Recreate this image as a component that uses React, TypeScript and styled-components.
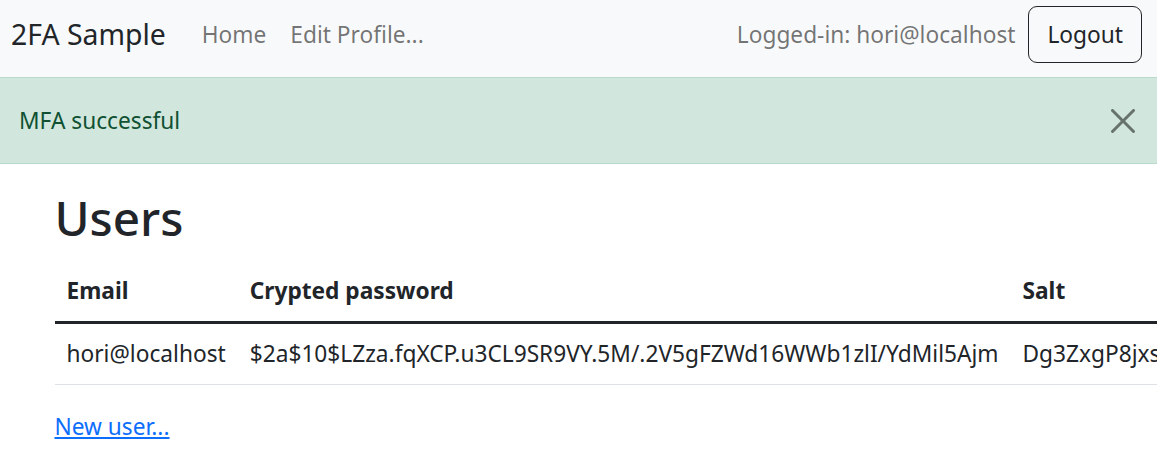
import { type FC } from 'react';
import styled, { createGlobalStyle } from 'styled-components';

const BODY_COLOR = `#212529`;
const MUTED = `rgba(0, 0, 0, 0.55)`;
const LINK_BLUE = `#0d6efd`;

const GlobalStyle = createGlobalStyle`
  html, body {
    margin: 0;
    padding: 0;
    overflow: hidden;
    background: #fff;
  }
  body {
    font-family: "Noto Sans", "Open Sans", sans-serif;
    font-size: 22.7px;
    line-height: 36px;
    color: ${BODY_COLOR};
  }
  * {
    box-sizing: border-box;
  }
`;

const Navbar = styled.nav`
  display: flex;
  align-items: center;
  height: 77px;
  padding: 6px 15px 14px 11px;
  background: #f8f9fa;
`;

const Brand = styled.a`
  font-size: 28.4px;
  line-height: 45px;
  color: ${BODY_COLOR};
  text-decoration: none;
  margin-right: 24px;
`;

const NavList = styled.ul`
  display: flex;
  list-style: none;
  margin: 0;
  padding: 0;
`;

const NavLink = styled.a`
  display: block;
  padding: 0 12px;
  color: ${MUTED};
  text-decoration: none;
`;

const NavRight = styled.div`
  display: flex;
  align-items: center;
  gap: 13px;
  margin-left: auto;
`;

const NavText = styled.span`
  color: ${MUTED};
`;

const OutlineButton = styled.button`
  font-family: inherit;
  font-size: 22.7px;
  line-height: 36px;
  height: 57px;
  padding: 0 18px;
  color: ${BODY_COLOR};
  background: transparent;
  border: 1.5px solid ${BODY_COLOR};
  border-radius: 9px;
  cursor: pointer;
`;

const Alert = styled.div`
  display: flex;
  align-items: center;
  justify-content: space-between;
  padding: 24px 22px 24px 19px;
  height: 87px;
  margin-bottom: 24px;
  color: #0f5132;
  background: #d1e7dd;
  border-top: 1px solid #badbcc;
  border-bottom: 1px solid #badbcc;
`;

const CloseButton = styled.button`
  display: flex;
  width: 24px;
  height: 24px;
  padding: 0;
  border: 0;
  background: transparent;
  color: #000;
  opacity: 0.5;
  cursor: pointer;
`;

const Container = styled.main`
  max-width: 1080px;
  margin: 0 auto;
  padding: 0 18px 0 16px;
`;

const Title = styled.h1`
  margin: 0 0 12px;
  font-size: 47.6px;
  font-weight: 500;
  line-height: 60.5px;
`;

const Table = styled.table`
  border-collapse: collapse;
  margin-bottom: 24px;
  white-space: nowrap;
`;

const Th = styled.th`
  padding: 12px;
  text-align: left;
  font-weight: 700;
  border-bottom: 3px solid ${BODY_COLOR};
`;

const Td = styled.td`
  padding: 12px;
  border-bottom: 1px solid #dee2e6;
`;

const TextLink = styled.a`
  color: ${LINK_BLUE};
  text-decoration: underline;
`;

const users = [
  {
    email: 'hori@localhost',
    crypted: '$2a$10$LZza.fqXCP.u3CL9SR9VY.5M/.2V5gFZWd16WWb1zlI/YdMil5Ajm',
    salt: 'Dg3ZxgP8jxsK2pWqYz7B',
  },
];

const CloseIcon: FC = () => (
  <svg width="24" height="24" viewBox="0 0 16 16" fill="currentColor">
    <path d="M.293.293a1 1 0 0 1 1.414 0L8 6.586 14.293.293a1 1 0 1 1 1.414 1.414L9.414 8l6.293 6.293a1 1 0 0 1-1.414 1.414L8 9.414l-6.293 6.293a1 1 0 0 1-1.414-1.414L6.586 8 .293 1.707a1 1 0 0 1 0-1.414z" />
  </svg>
);

const App: FC = () => (
  <>
    <GlobalStyle />
    <Navbar>
      <Brand href="#">2FA Sample</Brand>
      <NavList>
        <li><NavLink href="#">Home</NavLink></li>
        <li><NavLink href="#">Edit Profile...</NavLink></li>
      </NavList>
      <NavRight>
        <NavText>Logged-in: hori@localhost</NavText>
        <OutlineButton type="button">Logout</OutlineButton>
      </NavRight>
    </Navbar>
    <Alert role="alert">
      <span>MFA successful</span>
      <CloseButton type="button" aria-label="Close">
        <CloseIcon />
      </CloseButton>
    </Alert>
    <Container>
      <Title>Users</Title>
      <Table>
        <thead>
          <tr>
            <Th>Email</Th>
            <Th>Crypted password</Th>
            <Th>Salt</Th>
          </tr>
        </thead>
        <tbody>
          {users.map((u) => (
            <tr key={u.email}>
              <Td>{u.email}</Td>
              <Td>{u.crypted}</Td>
              <Td>{u.salt}</Td>
            </tr>
          ))}
        </tbody>
      </Table>
      <TextLink href="#">New user...</TextLink>
    </Container>
  </>
);

export default App;
